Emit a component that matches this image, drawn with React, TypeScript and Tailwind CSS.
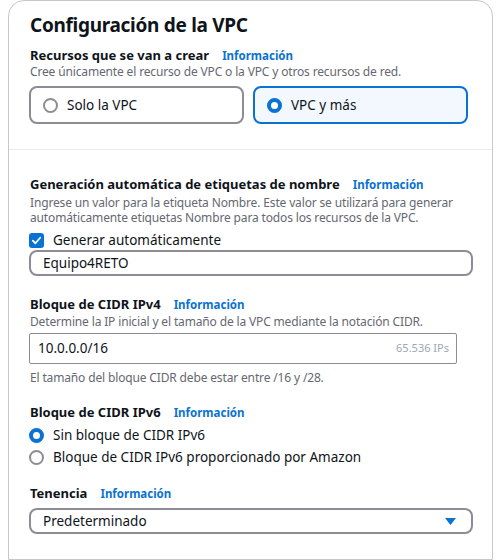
import React from "react";

const Info = () => (
  <span className="text-[11.5px] leading-[18px] font-bold text-[#0972d3]">Información</span>
);

const Label = ({ children, mt }: { children: React.ReactNode; mt: string }) => (
  <div className={"flex items-baseline gap-[13px] h-[18px] pl-[1px] " + mt}>
    <span className="text-[13px] leading-[18px] font-bold text-[#0f141a]">{children}</span>
    <Info />
  </div>
);

export default function App() {
  return (
    <div
      className="w-[496px] h-[560px] bg-white overflow-hidden"
      style={{ fontFamily: '"Noto Sans", "Open Sans", sans-serif' }}
    >
      <div className="ml-[8px] mr-[3px] h-[560px] border border-[#c6c6cd] rounded-t-[16px] flex flex-col">
        <div className="pl-[20px] pt-[9px] pb-[25px]">
          <h1 className="pl-[1px] text-[19px] leading-[30px] font-bold tracking-[-0.3px] text-[#0f141a]">
            Configuración de la VPC
          </h1>
          <Label mt="mt-[6px]">Recursos que se van a crear</Label>
          <div className="pl-[1px] text-[12px] leading-[16px] tracking-[-0.15px] text-[#656871]">
            Cree únicamente el recurso de VPC o la VPC y otros recursos de red.
          </div>
          <div className="mt-[6px] flex gap-[9px] w-[439px]">
            <div className="w-[215px] h-[38px] rounded-[8px] border-2 border-[#8c8c94] flex items-center pl-[12px] gap-[9px]">
              <span className="w-[15px] h-[15px] rounded-full border-2 border-[#8c8c94] bg-white"></span>
              <span className="text-[13.5px] text-[#0f141a]">Solo la VPC</span>
            </div>
            <div className="w-[215px] h-[38px] rounded-[8px] border-2 border-[#0972d3] bg-[#f2f8fd] flex items-center pl-[12px] gap-[9px]">
              <span className="w-[15px] h-[15px] rounded-full border-[4px] border-[#0972d3] bg-white"></span>
              <span className="text-[13.5px] text-[#0f141a]">VPC y más</span>
            </div>
          </div>
        </div>
        <div className="border-t border-[#e9ebed]"></div>
        <div className="pl-[20px] pt-[25px] flex-1">
          <Label mt="mt-0">Generación automática de etiquetas de nombre</Label>
          <div className="pl-[1px] mt-[2px] text-[12px] leading-[15px] tracking-[-0.15px] text-[#656871] w-[440px]">
            Ingrese un valor para la etiqueta Nombre. Este valor se utilizará para generar automáticamente etiquetas Nombre para todos los recursos de la VPC.
          </div>
          <div className="mt-[5px] flex items-center gap-[9px] h-[20px]">
            <span className="w-[15px] h-[15px] rounded-[3px] bg-[#0972d3] flex items-center justify-center">
              <svg width="11" height="11" viewBox="0 0 12 12">
                <path d="M2 6.2 L4.8 9 L10 3" fill="none" stroke="white" strokeWidth="2" strokeLinecap="round" strokeLinejoin="round" />
              </svg>
            </span>
            <span className="text-[13.5px] text-[#0f141a]">Generar automáticamente</span>
          </div>
          <div className="w-[444px] h-[26px] rounded-[8px] border-2 border-[#8c8c94] flex items-center pl-[12px]">
            <span className="text-[13.5px] text-[#0f141a]">Equipo4RETO</span>
          </div>

          <Label mt="mt-[19px]">Bloque de CIDR IPv4</Label>
          <div className="pl-[1px] mt-[1px] text-[12px] leading-[16px] tracking-[-0.15px] text-[#656871]">
            Determine la IP inicial y el tamaño de la VPC mediante la notación CIDR.
          </div>
          <div className="mt-[3px] w-[428px] h-[31px] rounded-[2px] border border-[#8c8c94] flex items-center pl-[8px] pr-[7px] justify-between">
            <span className="text-[13.5px] text-[#0f141a]">10.0.0.0/16</span>
            <span className="text-[11px] text-[#9ba7b6]">65.536 IPs</span>
          </div>
          <div className="pl-[1px] mt-[6px] text-[12px] leading-[16px] tracking-[-0.15px] text-[#656871]">
            El tamaño del bloque CIDR debe estar entre /16 y /28.
          </div>

          <Label mt="mt-[17px]">Bloque de CIDR IPv6</Label>
          <div className="mt-[3px] flex items-center gap-[9px] h-[22px]">
            <span className="w-[15px] h-[15px] rounded-full border-[4px] border-[#0972d3] bg-white"></span>
            <span className="text-[13.5px] text-[#0f141a]">Sin bloque de CIDR IPv6</span>
          </div>
          <div className="flex items-center gap-[9px] h-[22px]">
            <span className="w-[15px] h-[15px] rounded-full border-2 border-[#8c8c94] bg-white"></span>
            <span className="text-[13.5px] text-[#0f141a]">Bloque de CIDR IPv6 proporcionado por Amazon</span>
          </div>

          <Label mt="mt-[16px]">Tenencia</Label>
          <div className="mt-[6px] w-[444px] h-[26px] rounded-[8px] border-2 border-[#8c8c94] flex items-center pl-[12px] pr-[15px] justify-between">
            <span className="text-[13.5px] text-[#0f141a]">Predeterminado</span>
            <svg width="11" height="7" viewBox="0 0 11 7">
              <path d="M0 0 H11 L5.5 7 Z" fill="#0972d3" />
            </svg>
          </div>
        </div>
      </div>
    </div>
  );
}
